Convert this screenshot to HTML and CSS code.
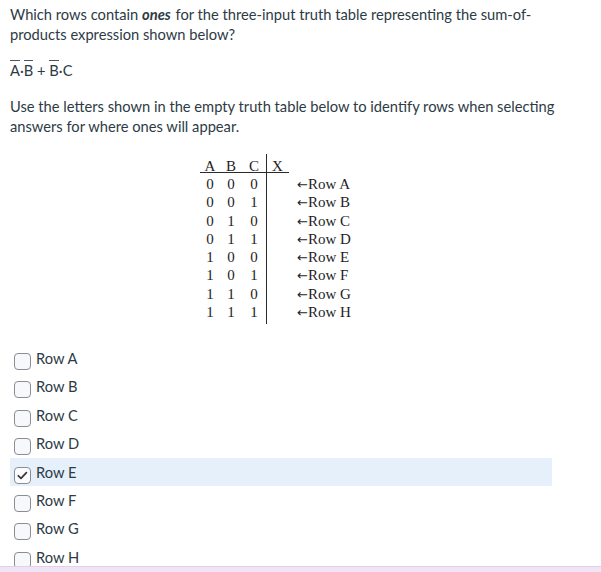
FILE: index.html
```html
<!DOCTYPE html>
<html lang="en">
<head>
<meta charset="utf-8">
<link rel="stylesheet" href="styles.css">
</head>
<body>
<div class="question">
  <p class="text">Which rows contain <em class="em">ones</em> for the three-input truth table representing the sum-of-products expression shown below?</p>
  <p class="text expr"><span class="bar">A</span>·<span class="bar">B</span> + <span class="bar">B</span>·C</p>
  <p class="text">Use the letters shown in the empty truth table below to identify rows when selecting answers for where ones will appear.</p>

  <div class="tt">
    <div class="divider"></div>
    <div class="h k1">A</div><div class="h k2">B</div><div class="h k3">C</div><div class="h k4">X</div>
    <div class="c k1 r1">0</div><div class="c k2 r1">0</div><div class="c k3 r1">0</div><div class="lab r1"><span class="arr">←</span>Row A</div>
    <div class="c k1 r2">0</div><div class="c k2 r2">0</div><div class="c k3 r2">1</div><div class="lab r2"><span class="arr">←</span>Row B</div>
    <div class="c k1 r3">0</div><div class="c k2 r3">1</div><div class="c k3 r3">0</div><div class="lab r3"><span class="arr">←</span>Row C</div>
    <div class="c k1 r4">0</div><div class="c k2 r4">1</div><div class="c k3 r4">1</div><div class="lab r4"><span class="arr">←</span>Row D</div>
    <div class="c k1 r5">1</div><div class="c k2 r5">0</div><div class="c k3 r5">0</div><div class="lab r5"><span class="arr">←</span>Row E</div>
    <div class="c k1 r6">1</div><div class="c k2 r6">0</div><div class="c k3 r6">1</div><div class="lab r6"><span class="arr">←</span>Row F</div>
    <div class="c k1 r7">1</div><div class="c k2 r7">1</div><div class="c k3 r7">0</div><div class="lab r7"><span class="arr">←</span>Row G</div>
    <div class="c k1 r8">1</div><div class="c k2 r8">1</div><div class="c k3 r8">1</div><div class="lab r8"><span class="arr">←</span>Row H</div>
  </div>

  <div class="options">
    <label class="opt"><span class="box"></span><span class="otext">Row A</span></label>
    <label class="opt"><span class="box"></span><span class="otext">Row B</span></label>
    <label class="opt"><span class="box"></span><span class="otext">Row C</span></label>
    <label class="opt"><span class="box"></span><span class="otext">Row D</span></label>
    <label class="opt selected"><span class="box checked"><svg width="15" height="15" viewBox="0 0 15 15"><path d="M3.4 7.8 L6 10.3 L11.4 4.6" fill="none" stroke="#3a3a3a" stroke-width="1.8" stroke-linecap="round" stroke-linejoin="round"/></svg></span><span class="otext">Row E</span></label>
    <label class="opt"><span class="box"></span><span class="otext">Row F</span></label>
    <label class="opt"><span class="box"></span><span class="otext">Row G</span></label>
    <label class="opt"><span class="box"></span><span class="otext">Row H</span></label>
  </div>
</div>
<div class="bottombar"></div>
</body>
</html>
```
FILE: styles.css
```css
html, body {
  margin: 0;
  padding: 0;
  background: #ffffff;
}
body {
  font-family: Lato, "Open Sans", sans-serif;
  font-size: 14.7px;
  color: #2d3b45;
}
.question {
  margin-left: 10px;
  width: 548px;
  padding-top: 4px;
}
.text {
  margin: 0;
  line-height: 20px;
}
.text + .text {
  margin-top: 16px;
}
.em {
  font-weight: bold;
  font-style: italic;
  padding-right: 1px;
}
.bar {
  border-top: 1px solid #4a5660;
}
.tt {
  margin-top: 20px;
  margin-left: 190px;
  display: grid;
  grid-template-columns: 20px 22px 24px 23px auto;
  grid-template-rows: 17px 2px repeat(8, 18.3px) 3px;
  font-family: "Liberation Serif", "Times New Roman", serif;
  font-size: 15px;
  color: #1e1e1e;
  width: max-content;
}
.k1 { grid-column: 1; }
.k2 { grid-column: 2; }
.k3 { grid-column: 3; }
.k4 { grid-column: 4; }
.h {
  grid-row: 1;
  text-align: center;
  line-height: 15px;
  padding-top: 3px;
  border-bottom: 1px solid #2a2a2a;
  box-sizing: border-box;
}
.divider {
  grid-column: 4;
  grid-row: 1 / -1;
  border-left: 1px solid #2a2a2a;
  margin-top: -2px;
}
.c {
  text-align: center;
  line-height: 18.3px;
}
.lab {
  grid-column: 5;
  line-height: 18.3px;
  padding-left: 8px;
  white-space: nowrap;
}
.arr {
  font-family: "DejaVu Sans", sans-serif;
  font-size: 13px;
  line-height: 1;
}
.r1 { grid-row: 3; }
.r2 { grid-row: 4; }
.r3 { grid-row: 5; }
.r4 { grid-row: 6; }
.r5 { grid-row: 7; }
.r6 { grid-row: 8; }
.r7 { grid-row: 9; }
.r8 { grid-row: 10; }
.options {
  margin-top: 19.6px;
  width: 542px;
  display: flex;
  flex-direction: column;
}
.opt {
  display: flex;
  align-items: flex-start;
  height: 28.4px;
  box-sizing: border-box;
  padding: 4px 0 0 4px;
  line-height: 20px;
}
.opt.selected {
  background: #e5f0fb;
}
.box {
  width: 17px;
  height: 17px;
  box-sizing: border-box;
  margin-top: 5px;
  border: 1px solid #8a8d91;
  border-radius: 4px;
  background: #f6f8fc;
  display: flex;
  align-items: center;
  justify-content: center;
  flex: none;
}
.box.checked {
  background: #fbfcfe;
}
.otext {
  margin-left: 5px;
}
.bottombar {
  position: fixed;
  left: 0;
  right: 0;
  bottom: 0;
  height: 5px;
  background: #f0e5f7;
  border-top: 1px solid #e0d0ec;
}
```
